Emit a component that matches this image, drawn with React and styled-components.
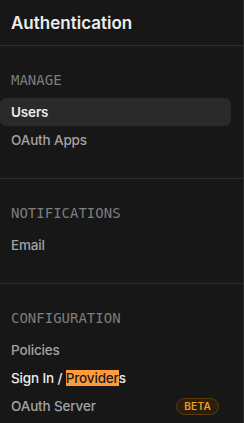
import styled, { createGlobalStyle } from "styled-components";

const GlobalStyle = createGlobalStyle`
	body {
		margin: 0;
		background: #171717;
	}
`;

const Sidebar = styled.nav`
	width: 244px;
	height: 423px;
	box-sizing: border-box;
	background: #171717;
	border-right: 1px solid #2e2e2e;
	font-family: Inter, "Noto Sans", sans-serif;
	overflow: hidden;
`;

const Header = styled.div`
	height: 46px;
	box-sizing: border-box;
	display: flex;
	align-items: center;
	padding: 0 11px;
	border-bottom: 1px solid #2e2e2e;
`;

const Title = styled.h1`
	margin: 0;
	font-size: 17px;
	font-weight: 600;
	color: #ededed;
`;

const Section = styled.section`
	padding: 26px 12px 24px 0;
	border-bottom: ${(props) => (props.last ? "none" : "1px solid #2e2e2e")};
`;

const Label = styled.div`
	height: 16px;
	line-height: 16px;
	padding-left: 11px;
	margin-bottom: 10px;
	font-family: "DejaVu Sans Mono", "Liberation Mono", monospace;
	font-size: 14px;
	color: #7d7d7d;
`;

const Item = styled.div`
	height: 28px;
	display: flex;
	align-items: center;
	justify-content: space-between;
	padding: 0 12px 0 11px;
	border-radius: 6px;
	font-size: 13.5px;
	letter-spacing: -0.15px;
	font-weight: ${(props) => (props.active ? 600 : 500)};
	color: ${(props) => (props.active || props.bright ? "#ededed" : "#a3a3a3")};
	background: ${(props) => (props.active ? "#2a2a2a" : "transparent")};
`;

const Selected = styled.span`
	background: #ff9b3d;
	color: #1c1c1c;
`;

const Badge = styled.span`
	display: flex;
	align-items: center;
	height: 17px;
	box-sizing: border-box;
	padding: 0 7px;
	border-radius: 999px;
	border: 1px solid #5a3a0e;
	background: #2b1f0c;
	color: #f0a020;
	font-size: 10px;
	font-weight: 600;
	letter-spacing: 0.3px;
`;

const App = () => {
	return (
		<>
			<GlobalStyle />
			<Sidebar>
				<Header>
					<Title>Authentication</Title>
				</Header>

				<Section>
					<Label>MANAGE</Label>
					<Item active>Users</Item>
					<Item>OAuth Apps</Item>
				</Section>

				<Section>
					<Label>NOTIFICATIONS</Label>
					<Item>Email</Item>
				</Section>

				<Section last>
					<Label>CONFIGURATION</Label>
					<Item>Policies</Item>
					<Item bright>
						<span>
							Sign In / <Selected>Provider</Selected>s
						</span>
					</Item>
					<Item>
						OAuth Server
						<Badge>BETA</Badge>
					</Item>
				</Section>
			</Sidebar>
		</>
	);
};

export default App;
